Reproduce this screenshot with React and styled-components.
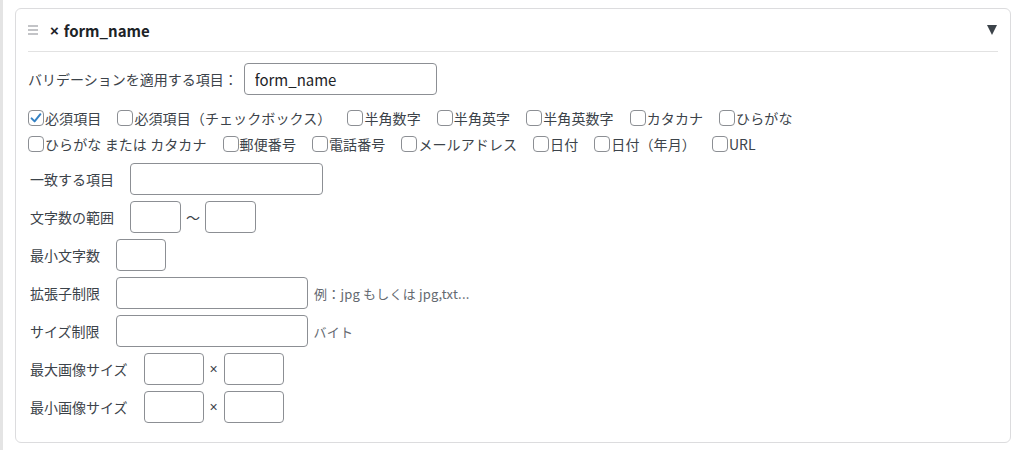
import React from 'react';
import styled, { createGlobalStyle } from 'styled-components';

const GlobalStyle = createGlobalStyle`
  html, body {
    margin: 0;
    padding: 0;
    background: #fff;
  }
  body {
    font-family: "Noto Sans CJK JP", "Noto Sans", sans-serif;
    color: #3c434a;
  }
`;

const Page = styled.div`
  height: 450px;
  box-sizing: border-box;
  border-left: 3px solid #e4e4e4;
  padding: 8px 12px 0 12px;
`;

const Card = styled.section`
  width: 996px;
  box-sizing: border-box;
  border: 1px solid #dcdcde;
  border-radius: 6px;
  padding: 0 12px 19px 12px;
`;

const Header = styled.div`
  display: flex;
  align-items: center;
  height: 42px;
  border-bottom: 1px solid #e2e2e2;
`;

const Grip = styled.span`
  display: flex;
  flex-direction: column;
  gap: 2px;
  width: 10px;
  margin-right: 12px;
  span {
    height: 2px;
    background: #c3c4c7;
  }
`;

const Remove = styled.span`
  font-family: "Liberation Sans", Arial, sans-serif;
  font-size: 15px;
  font-weight: 700;
  color: #1d2327;
  margin-right: 5px;
  line-height: 1;
`;

const Title = styled.span`
  font-size: 15px;
  font-weight: 700;
  color: #1d2327;
  flex: 1;
`;

const Toggle = styled.span`
  width: 0;
  height: 0;
  border-left: 5px solid transparent;
  border-right: 5px solid transparent;
  border-top: 10px solid #3c434a;
  margin-right: 1px;
`;

const TargetRow = styled.div`
  display: flex;
  align-items: center;
  margin-top: 11px;
`;

const Label = styled.label`
  font-size: 14px;
  color: #3c434a;
  margin-right: ${(p) => p.$gap || 16}px;
  white-space: nowrap;
`;

const TextInput = styled.input`
  box-sizing: border-box;
  width: ${(p) => p.$w}px;
  height: 32px;
  border: 1px solid #8c8f94;
  border-radius: 4px;
  padding: 0 10px;
  font-family: inherit;
  font-size: 15px;
  color: #1d2327;
  background: #fff;
  outline: none;
`;

const Checks = styled.div`
  margin-top: 10px;
  display: flex;
  flex-wrap: wrap;
  width: 800px;
`;

const Break = styled.div`
  flex-basis: 100%;
  height: 0;
`;

const CheckItem = styled.label`
  display: flex;
  align-items: center;
  height: 26px;
  margin-right: 16px;
  font-size: 14px;
  letter-spacing: 0.1px;
  color: #3c434a;
  white-space: nowrap;
`;

const Box = styled.span`
  box-sizing: border-box;
  width: 16px;
  height: 16px;
  border: 1px solid #8c8f94;
  border-radius: 4px;
  margin-right: 1px;
  display: flex;
  align-items: center;
  justify-content: center;
  background: #fff;
`;

const Fields = styled.div`
  margin-top: 6px;
  display: flex;
  flex-direction: column;
  gap: 6px;
  padding-left: 2px;
`;

const FieldRow = styled.div`
  display: flex;
  align-items: center;
`;

const Tilde = styled.span`
  font-size: 14px;
  color: #3c434a;
  margin: 0 5px;
`;

const Times = styled.span`
  font-family: "Liberation Sans", Arial, sans-serif;
  font-size: 14px;
  color: #3c434a;
  margin: 0 6px;
`;

const Hint = styled.span`
  font-size: 13px;
  letter-spacing: 0.2px;
  color: #646970;
  margin-left: 6px;
`;

const checks = [
  ['必須項目', true],
  ['必須項目（チェックボックス）'],
  ['半角数字'],
  ['半角英字'],
  ['半角英数字'],
  ['カタカナ'],
  ['ひらがな'],
  ['ひらがな または カタカナ'],
  ['郵便番号'],
  ['電話番号'],
  ['メールアドレス'],
  ['日付'],
  ['日付（年月）'],
  ['URL'],
];

const Checkbox = ({ label, checked }) => (
  <CheckItem>
    <Box>
      {checked && (
        <svg width="14" height="14" viewBox="0 0 14 14">
          <path d="M2.6 7.4 L5.6 10.4 L11.4 3.2" fill="none" stroke="#3582c4" strokeWidth="2" strokeLinecap="round" strokeLinejoin="round" />
        </svg>
      )}
    </Box>
    {label}
  </CheckItem>
);

export default function App() {
  return (
    <Page>
      <GlobalStyle />
      <Card>
        <Header>
          <Grip>
            <span />
            <span />
            <span />
          </Grip>
          <Remove>×</Remove>
          <Title>form_name</Title>
          <Toggle />
        </Header>

        <TargetRow>
          <Label $gap={6}>バリデーションを適用する項目：</Label>
          <TextInput $w={193} defaultValue="form_name" />
        </TargetRow>

        <Checks>
          {checks.map(([label, checked], i) => (
            <React.Fragment key={label}>
              <Checkbox label={label} checked={checked} />
              {i === 6 && <Break />}
            </React.Fragment>
          ))}
        </Checks>

        <Fields>
          <FieldRow>
            <Label>一致する項目</Label>
            <TextInput $w={193} />
          </FieldRow>
          <FieldRow>
            <Label>文字数の範囲</Label>
            <TextInput $w={51} />
            <Tilde>〜</Tilde>
            <TextInput $w={51} />
          </FieldRow>
          <FieldRow>
            <Label>最小文字数</Label>
            <TextInput $w={50} />
          </FieldRow>
          <FieldRow>
            <Label>拡張子制限</Label>
            <TextInput $w={192} />
            <Hint>例：jpg もしくは jpg,txt...</Hint>
          </FieldRow>
          <FieldRow>
            <Label>サイズ制限</Label>
            <TextInput $w={192} />
            <Hint>バイト</Hint>
          </FieldRow>
          <FieldRow>
            <Label>最大画像サイズ</Label>
            <TextInput $w={60} />
            <Times>×</Times>
            <TextInput $w={60} />
          </FieldRow>
          <FieldRow>
            <Label>最小画像サイズ</Label>
            <TextInput $w={60} />
            <Times>×</Times>
            <TextInput $w={60} />
          </FieldRow>
        </Fields>
      </Card>
    </Page>
  );
}
